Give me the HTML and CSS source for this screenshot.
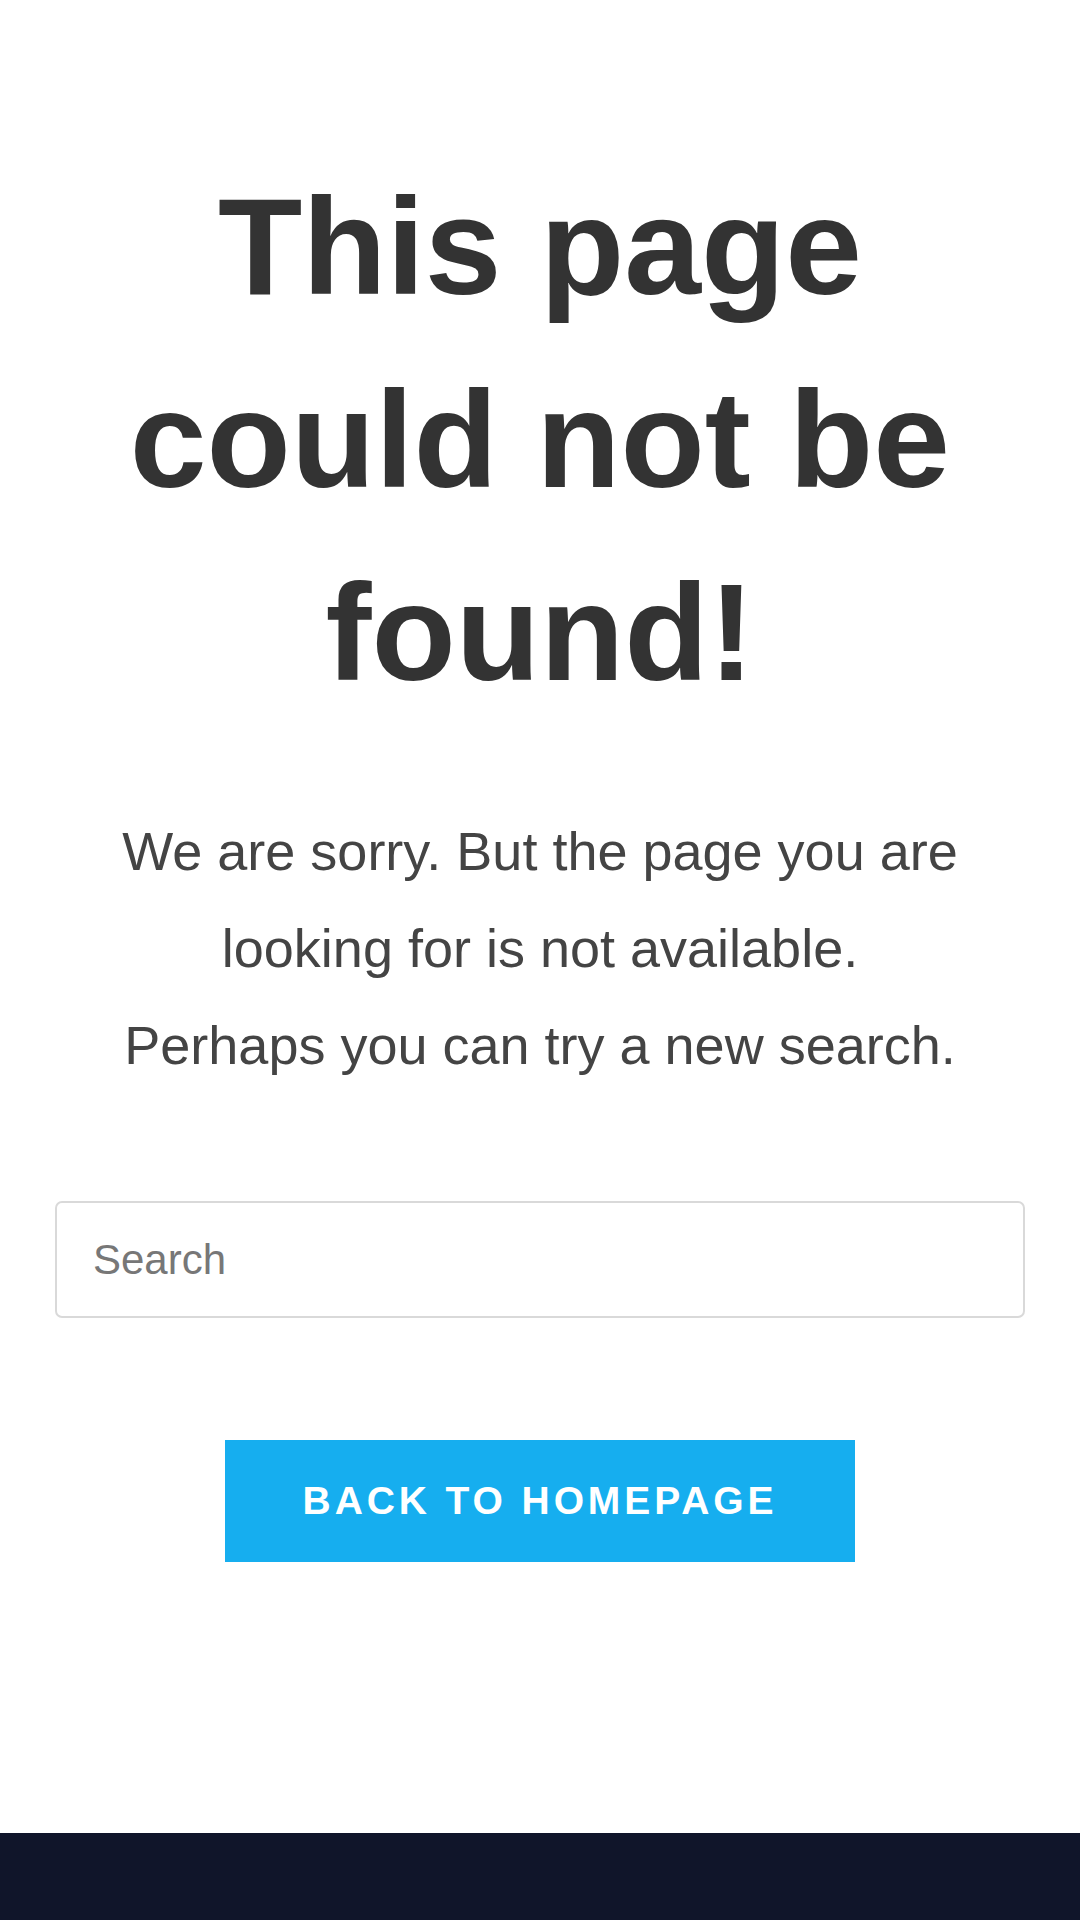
FILE: index.html
```html
<!DOCTYPE html>
<html lang="en">
<head>
<meta charset="utf-8">
<title>Page not found</title>
<link rel="stylesheet" href="styles.css">
</head>
<body>
<main class="page">
  <section class="notfound">
    <h1 class="title">This page could not be found!</h1>
    <p class="lead">We are sorry. But the page you are looking for is not available.<br>Perhaps you can try a new search.</p>
    <form class="search" action="#">
      <input class="search-input" type="search" placeholder="Search">
    </form>
    <a class="btn-home" href="#">Back to Homepage</a>
  </section>
</main>
<footer class="footer"></footer>
</body>
</html>
```

FILE: styles.css
```css
* { box-sizing: border-box; }
html, body { margin: 0; padding: 0; }
body {
  font-family: "Liberation Sans", Arial, sans-serif;
  background: #fff;
  width: 1080px;
  height: 1920px;
  display: flex;
  flex-direction: column;
}
.page {
  flex: 1;
}
.notfound {
  padding: 150px 55px 0;
  display: flex;
  flex-direction: column;
  align-items: center;
  text-align: center;
}
.title {
  margin: 0;
  font-size: 138px;
  line-height: 193px;
  font-weight: 700;
  color: #333333;
}
.lead {
  margin: 74px 0 0;
  font-size: 54px;
  line-height: 97px;
  color: #444444;
}
.search {
  margin: 107px 0 0;
  width: 100%;
}
.search-input {
  display: block;
  width: 100%;
  height: 117px;
  border: 2px solid #d9d9d9;
  border-radius: 7px;
  padding: 0 36px;
  font-family: "Liberation Sans", Arial, sans-serif;
  font-size: 42px;
  color: #333;
  background: #fff;
  outline: none;
  -webkit-appearance: none;
  appearance: none;
}
.search-input::placeholder { color: #777777; }
.btn-home {
  margin-top: 122px;
  width: 630px;
  height: 122px;
  display: flex;
  align-items: center;
  justify-content: center;
  background: #16aeef;
  color: #ffffff;
  text-decoration: none;
  text-transform: uppercase;
  font-weight: 700;
  font-size: 39px;
  letter-spacing: 3.9px;
  padding-left: 0;
}
.footer {
  height: 87px;
  background: #10152a;
}
```
